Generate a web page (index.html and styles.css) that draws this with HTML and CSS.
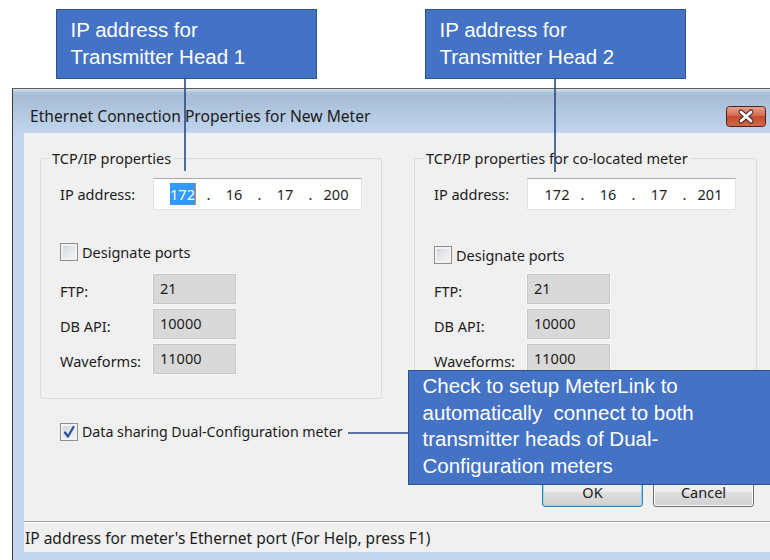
FILE: index.html
```html
<!DOCTYPE html>
<html lang="en">
<head>
<meta charset="utf-8">
<title>Ethernet Connection Properties for New Meter</title>
<link rel="stylesheet" href="styles.css">
</head>
<body>
<div class="stage">
  <div class="window">
    <div class="titlebar">
      <span class="title">Ethernet Connection Properties for New Meter</span>
      <span class="close" aria-label="Close">
        <svg width="40" height="21" viewBox="0 0 40 21">
          <defs>
            <linearGradient id="closeFill" x1="0" y1="0" x2="0" y2="1">
              <stop offset="0" stop-color="#eaa592"/>
              <stop offset="0.45" stop-color="#d66a52"/>
              <stop offset="0.5" stop-color="#c44a30"/>
              <stop offset="1" stop-color="#cf6a47"/>
            </linearGradient>
          </defs>
          <rect x="0.5" y="0.5" width="39" height="20" rx="3" fill="url(#closeFill)" stroke="#4a2420"/>
          <path d="M15 6 L25 15 M25 6 L15 15" stroke="#3b2320" stroke-width="5" stroke-linecap="round"/>
          <path d="M15 6 L25 15 M25 6 L15 15" stroke="#ffffff" stroke-width="3" stroke-linecap="round"/>
        </svg>
      </span>
    </div>
    <div class="frame">
      <div class="client">
        <div class="groups">
          <fieldset class="group group-main">
            <legend>TCP/IP properties</legend>
            <div class="ip-row">
              <span class="lbl">IP address:</span>
              <div class="ipbox">
                <span class="oct"><span class="sel">172</span></span><span class="dot">.</span><span class="oct">16</span><span class="dot">.</span><span class="oct">17</span><span class="dot">.</span><span class="oct">200</span>
              </div>
            </div>
            <div class="check ports-check"><span class="box"></span><span>Designate ports</span></div>
            <div class="ports">
              <div class="port-row"><span class="lbl">FTP:</span><span class="field">21</span></div>
              <div class="port-row"><span class="lbl">DB API:</span><span class="field">10000</span></div>
              <div class="port-row"><span class="lbl">Waveforms:</span><span class="field">11000</span></div>
            </div>
          </fieldset>
          <fieldset class="group group-peer">
            <legend>TCP/IP properties for co-located meter</legend>
            <div class="ip-row">
              <span class="lbl">IP address:</span>
              <div class="ipbox">
                <span class="oct">172</span><span class="dot">.</span><span class="oct">16</span><span class="dot">.</span><span class="oct">17</span><span class="dot">.</span><span class="oct">201</span>
              </div>
            </div>
            <div class="check ports-check peer-check"><span class="box"></span><span>Designate ports</span></div>
            <div class="ports">
              <div class="port-row"><span class="lbl">FTP:</span><span class="field">21</span></div>
              <div class="port-row"><span class="lbl">DB API:</span><span class="field">10000</span></div>
              <div class="port-row"><span class="lbl">Waveforms:</span><span class="field">11000</span></div>
            </div>
          </fieldset>
        </div>
        <div class="check dual-check">
          <span class="box checked">
            <svg width="16" height="16" viewBox="0 0 16 16"><path d="M4 8.5 L7 12.5 L12.5 3" fill="none" stroke="#2b4f9e" stroke-width="2.2" stroke-linecap="round" stroke-linejoin="round"/></svg>
          </span>
          <span class="dual-text">Data sharing Dual-Configuration meter</span>
        </div>
        <div class="buttons">
          <span class="btn btn-default">OK</span>
          <span class="btn">Cancel</span>
        </div>
        <div class="status">IP address for meter's Ethernet port (For Help, press F1)</div>
      </div>
    </div>
  </div>

  <svg class="connectors" width="770" height="560" viewBox="0 0 770 560">
    <line x1="185" y1="79" x2="185" y2="171" />
    <line x1="555" y1="79" x2="555" y2="172" />
    <line x1="348" y1="433" x2="409" y2="433" />
  </svg>

  <div class="callout callout-head1">IP address for<br>Transmitter Head 1</div>
  <div class="callout callout-head2">IP address for<br>Transmitter Head 2</div>
  <div class="callout callout-dual">Check to setup MeterLink to<br>automatically&nbsp; connect to both<br>transmitter heads of Dual-<br>Configuration meters</div>
</div>
</body>
</html>
```

FILE: styles.css
```css
* {
  box-sizing: border-box;
}

html,
body {
  margin: 0;
  padding: 0;
}

body {
  width: 770px;
  height: 560px;
  overflow: hidden;
  background: #ffffff;
  font-family: "Noto Sans", "DejaVu Sans", sans-serif;
  color: #1c1c1c;
}

.stage {
  position: relative;
  width: 770px;
  height: 560px;
  padding: 88px 0 0 12px;
}

/* ---------- window chrome ---------- */

.window {
  width: 773px;
  border-left: 1px solid #3b3b3b;
  border-top: 1px solid #5e5e5e;
  background: #c1d6ee;
}

.titlebar {
  height: 44px;
  display: flex;
  align-items: center;
  padding-left: 17px;
  background: linear-gradient(#d9e3ef 0px, #a9bdd6 4px, #abc0d9 14px, #b7cce5 30px, #c1d6ee 44px);
}

.title {
  font-size: 15.6px;
  padding-top: 10px;
  color: #1b1b1b;
  white-space: nowrap;
}

.close {
  margin-left: auto;
  margin-right: 19px;
  align-self: flex-start;
  margin-top: 17px;
  width: 40px;
  height: 21px;
  display: block;
}

.close svg {
  display: block;
}

.frame {
  padding: 0 11px 8px 11px;
}

.client {
  background: #f0f0f0;
  font-size: 14.5px;
}

/* ---------- property groups ---------- */

.groups {
  display: flex;
  gap: 32px;
  padding: 16px 0 0 16px;
}

.group {
  margin: 0;
  min-width: 0;
  border: 1px solid #d6dde3;
  border-radius: 3px;
  padding: 11px 0 24px 19px;
}

.group-main {
  width: 342px;
}

.group-peer {
  width: 343px;
}

.group legend {
  line-height: 18px;
  padding: 0 2px;
  margin-left: -10px;
  color: #1c1c1c;
}

.ip-row {
  display: flex;
  align-items: center;
  height: 32px;
}

.lbl {
  width: 93px;
  flex: none;
  white-space: nowrap;
}

.ipbox {
  width: 209px;
  height: 32px;
  display: flex;
  align-items: center;
  padding-left: 10px;
  background: #ffffff;
  border: 1px solid #e2e3ea;
  border-top-color: #abadb3;
}

.oct {
  width: 38px;
  text-align: center;
}

.dot {
  width: 13px;
  text-align: center;
}

.sel {
  background: #3399ff;
  color: #ffffff;
  padding: 1px 0;
  border-right: 1px solid #e8843a;
}

/* ---------- check boxes ---------- */

.check {
  display: flex;
  align-items: center;
  gap: 4px;
  height: 19px;
  white-space: nowrap;
}

.box {
  width: 18px;
  height: 18px;
  flex: none;
  border: 1px solid #8e8f8f;
  background: linear-gradient(135deg, #cdd0d4 0%, #e3e5e8 45%, #f7f7f7 100%);
  box-shadow: inset 0 0 0 2px #f2f2f2;
  display: flex;
  align-items: center;
  justify-content: center;
}

.box svg {
  display: block;
}

.ports-check {
  margin-top: 32px;
}

.peer-check {
  margin-top: 35px;
}

.ports {
  display: flex;
  flex-direction: column;
  gap: 5px;
  margin-top: 13px;
}

.peer-check + .ports {
  margin-top: 10px;
}

.port-row {
  display: flex;
  align-items: center;
  height: 30px;
}

.port-row .lbl {
  padding-top: 4px;
}

.field {
  width: 83px;
  height: 30px;
  padding: 3px 0 0 6px;
  background: #d9d9d9;
  border: 1px solid #c8c8c8;
  box-shadow: 0 0 0 1px #f7f7f7;
  line-height: 20px;
}

/* ---------- bottom area ---------- */

.dual-check {
  margin: 23px 0 0 36px;
}

.dual-text {
  font-size: 14.2px;
}

.buttons {
  display: flex;
  justify-content: flex-end;
  gap: 10px;
  margin-top: 36px;
  padding-right: 20px;
}

.btn {
  width: 101px;
  height: 30px;
  display: flex;
  align-items: center;
  justify-content: center;
  border: 1px solid #707070;
  border-radius: 3px;
  background: linear-gradient(#f3f3f3 0%, #ececec 48%, #dedede 52%, #d1d1d1 100%);
  box-shadow: inset 0 0 0 1px #fbfbfb;
}

.btn-default {
  border-color: #3c7fb1;
  box-shadow: inset 0 0 0 1px #8ed3f2;
}

.status {
  margin-top: 14px;
  height: 31px;
  border-top: 1px solid #a0a0a0;
  box-shadow: inset 0 1px #ffffff;
  padding: 7px 0 0 1px;
  line-height: 18px;
  font-size: 15.5px;
  white-space: nowrap;
}

/* ---------- annotations ---------- */

.connectors {
  position: absolute;
  left: 0;
  top: 0;
  pointer-events: none;
}

.connectors line {
  stroke: #2a4a86;
  stroke-width: 1.6;
}

.callout {
  position: absolute;
  background: #4472c4;
  border: 1.5px solid #2f528f;
  color: #ffffff;
  font-family: "Liberation Sans", Arial, sans-serif;
  font-size: 20.5px;
  line-height: 27px;
  white-space: nowrap;
}

.callout-head1 {
  left: 56px;
  top: 9px;
  width: 261px;
  height: 70px;
  padding: 6px 0 0 13.5px;
}

.callout-head2 {
  left: 425px;
  top: 9px;
  width: 261px;
  height: 70px;
  padding: 6px 0 0 13.5px;
}

.callout-dual {
  left: 408px;
  top: 370px;
  width: 372px;
  height: 115px;
  padding: 2px 0 0 13.5px;
  line-height: 26.5px;
}
```
